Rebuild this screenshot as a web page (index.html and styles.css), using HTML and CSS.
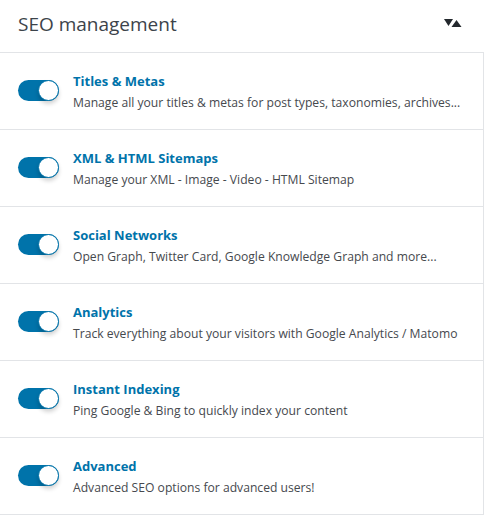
FILE: index.html
```html
<!DOCTYPE html>
<html>
<head>
<meta charset="utf-8">
<link rel="stylesheet" href="styles.css">
</head>
<body>
<div class="panel">
  <div class="panel-head">
    <h2 class="panel-title">SEO management</h2>
    <span class="panel-toggle" aria-hidden="true">
      <svg width="18" height="8" viewBox="0 0 18 8"><polygon points="0,0 9,0 4.5,7" fill="#23282d"/><polygon points="7.5,8 17.5,8 12.5,1" fill="#23282d"/></svg>
    </span>
  </div>
  <ul class="features">
    <li class="feature">
      <span class="switch"><span class="knob"></span></span>
      <div class="feature-text">
        <a class="feature-title">Titles &amp; Metas</a>
        <p class="feature-desc">Manage all your titles &amp; metas for post types, taxonomies, archives...</p>
      </div>
    </li>
    <li class="feature">
      <span class="switch"><span class="knob"></span></span>
      <div class="feature-text">
        <a class="feature-title">XML &amp; HTML Sitemaps</a>
        <p class="feature-desc">Manage your XML - Image - Video - HTML Sitemap</p>
      </div>
    </li>
    <li class="feature">
      <span class="switch"><span class="knob"></span></span>
      <div class="feature-text">
        <a class="feature-title">Social Networks</a>
        <p class="feature-desc">Open Graph, Twitter Card, Google Knowledge Graph and more...</p>
      </div>
    </li>
    <li class="feature">
      <span class="switch"><span class="knob"></span></span>
      <div class="feature-text">
        <a class="feature-title">Analytics</a>
        <p class="feature-desc">Track everything about your visitors with Google Analytics / Matomo</p>
      </div>
    </li>
    <li class="feature">
      <span class="switch"><span class="knob"></span></span>
      <div class="feature-text">
        <a class="feature-title">Instant Indexing</a>
        <p class="feature-desc">Ping Google &amp; Bing to quickly index your content</p>
      </div>
    </li>
    <li class="feature">
      <span class="switch"><span class="knob"></span></span>
      <div class="feature-text">
        <a class="feature-title">Advanced</a>
        <p class="feature-desc">Advanced SEO options for advanced users!</p>
      </div>
    </li>
  </ul>
</div>
</body>
</html>
```
FILE: styles.css
```css
* { box-sizing: border-box; }
html, body { margin: 0; padding: 0; background: #fff; }
body { font-family: "Open Sans", "Noto Sans", sans-serif; color: #3c434a; }

.panel { width: 484px; }

.panel-head {
  height: 53px;
  display: flex;
  align-items: center;
  justify-content: space-between;
  padding: 0 22px 0 18px;
  border-bottom: 1px solid #e2e4e7;
}
.panel-title {
  margin: 0;
  font-size: 19px;
  font-weight: 400;
  color: #3c434a;
  line-height: 1;
  padding-bottom: 4px;
}
.panel-toggle { display: flex; padding-bottom: 6px; }

.features { list-style: none; margin: 0; padding: 0; }
.feature {
  height: 77px;
  display: flex;
  align-items: center;
  gap: 14px;
  padding: 0 18px;
  border-bottom: 1px solid #e2e4e7;
  border-right: 1px solid #e2e4e7;
}

.switch {
  flex: none;
  width: 41px;
  height: 21px;
  border-radius: 11px;
  background: #0073aa;
  display: flex;
  justify-content: flex-end;
  align-items: center;
  margin-top: -2px;
}
.knob {
  width: 21px;
  height: 21px;
  border-radius: 50%;
  background: #fff;
  border: 1px solid #0073aa;
  box-shadow: 0 3px 4px rgba(0,0,0,0.18);
}

.feature-text { display: flex; flex-direction: column; gap: 6px; padding-top: 1px; }
.feature-title {
  font-size: 13px;
  font-weight: 700;
  color: #0073aa;
  line-height: 16px;
}
.feature-desc {
  margin: 0;
  font-size: 12.15px;
  line-height: 16px;
  color: #46494e;
}
```
